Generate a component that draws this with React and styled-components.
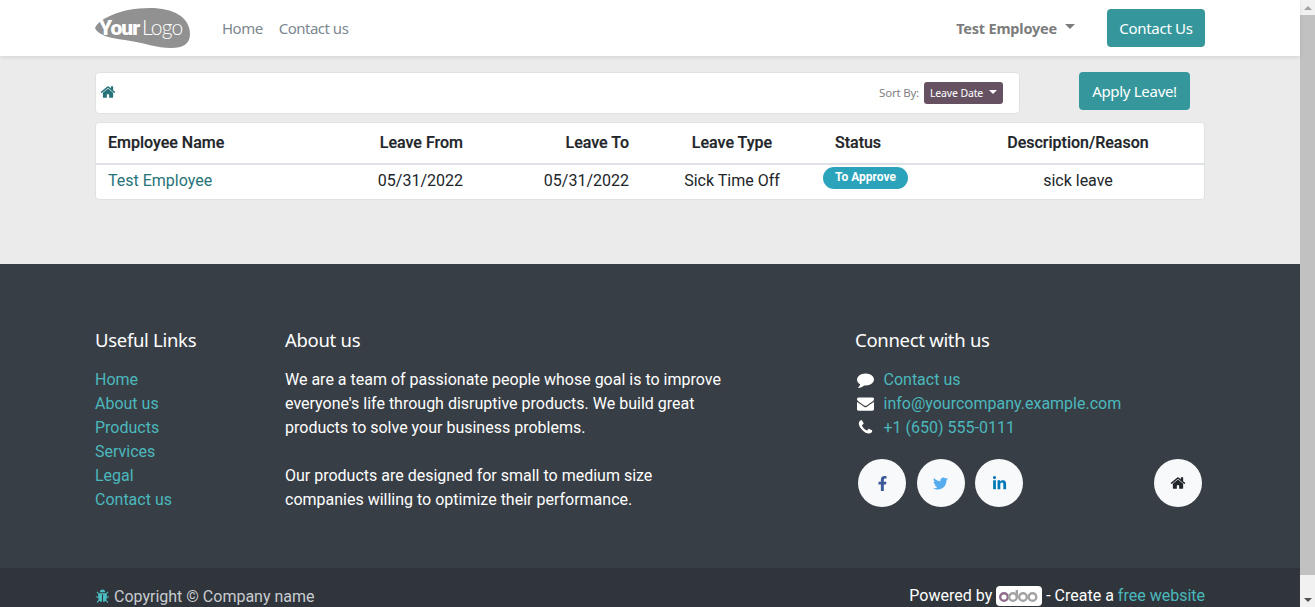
import styled, { createGlobalStyle } from 'styled-components';
import { FaFacebookF, FaTwitter, FaLinkedinIn } from 'react-icons/fa';

const GlobalStyle = createGlobalStyle`
  html, body {
    margin: 0;
    height: 100%;
    overflow: hidden;
  }
  body {
    font-family: Roboto, "Liberation Sans", sans-serif;
    font-size: 16px;
    line-height: 24px;
    color: #212529;
    background: #ebebeb;
  }
`;

const Screen = styled.div`
  display: flex;
  width: 1315px;
  height: 607px;
  overflow: hidden;
`;

const Page = styled.div`
  width: 1300px;
  flex: none;
  display: flex;
  flex-direction: column;
`;

const Scrollbar = styled.div`
  width: 15px;
  flex: none;
  background: #f1f1f1;
  display: flex;
  flex-direction: column;
  align-items: center;
`;

const ScrollArrow = styled.div`
  height: 15px;
  width: 15px;
  flex: none;
  display: flex;
  align-items: center;
  justify-content: center;
  &::before {
    content: '';
    border-left: 4px solid transparent;
    border-right: 4px solid transparent;
    ${p => p.$down ? 'border-top: 4px solid #505050;' : 'border-bottom: 4px solid #a3a3a3;'}
  }
`;

const ScrollThumb = styled.div`
  width: 15px;
  height: 560px;
  background: #c1c1c1;
  margin-bottom: auto;
`;

const Navbar = styled.header`
  height: 56px;
  flex: none;
  background: #fff;
  box-shadow: 0 2px 4px rgba(0, 0, 0, 0.08);
  padding: 0 95px;
  display: flex;
  align-items: center;
  position: relative;
`;

const Logo = styled.svg`
  width: 96px;
  height: 42px;
  margin-right: 31px;
`;

const NavLink = styled.a`
  font-family: "Noto Sans", sans-serif;
  font-size: 15px;
  letter-spacing: -0.5px;
  color: #7c8790;
  margin-right: 16px;
`;

const UserMenu = styled.div`
  margin-left: auto;
  margin-right: 32px;
  font-family: "Noto Sans", sans-serif;
  font-size: 14.5px;
  font-weight: 700;
  letter-spacing: -0.2px;
  color: #7c7c7c;
  display: flex;
  align-items: center;
`;

const Caret = styled.span`
  display: inline-block;
  margin-left: ${p => p.$gap || 8}px;
  border-top: ${p => p.$size || 5}px solid ${p => p.$color || '#7c7c7c'};
  border-left: ${p => p.$size || 5}px solid transparent;
  border-right: ${p => p.$size || 5}px solid transparent;
  margin-top: -3px;
`;

const TealButton = styled.a`
  display: flex;
  align-items: center;
  justify-content: center;
  background: #35979c;
  color: #fff;
  font-family: "Noto Sans", sans-serif;
  letter-spacing: -0.3px;
  font-size: 15px;
  border-radius: 4px;
  height: 38px;
  width: ${p => p.$w}px;
  flex: none;
`;

const Main = styled.main`
  height: 208px;
  box-sizing: border-box;
  flex: none;
  padding: 16px 95px 0;
`;

const TopRow = styled.div`
  display: flex;
  align-items: flex-start;
  gap: 59px;
`;

const Breadcrumb = styled.div`
  width: 925px;
  height: 42px;
  box-sizing: border-box;
  flex: none;
  background: #fff;
  border: 1px solid #dfe2e4;
  border-radius: 4px;
  padding: 0 16px 0 4px;
  display: flex;
  align-items: center;
`;

const BreadcrumbHome = styled.svg`
  width: 16px;
  height: 16px;
  margin-top: -2px;
  fill: #27737a;
`;

const SortLabel = styled.span`
  margin-left: auto;
  font-family: "Noto Sans", sans-serif;
  font-size: 11.5px;
  letter-spacing: -0.2px;
  color: #7f7f7f;
  margin-right: 5px;
`;

const SortButton = styled.span`
  display: flex;
  align-items: center;
  height: 22px;
  width: 79px;
  box-sizing: border-box;
  padding: 0 6px;
  background: #665163;
  color: #fff;
  border-radius: 3px;
  font-family: "Noto Sans", sans-serif;
  font-size: 10.5px;
  letter-spacing: -0.15px;
  white-space: nowrap;
`;

const TableCard = styled.div`
  margin-top: 8px;
  background: #fff;
  border: 1px solid #dfe2e4;
  border-radius: 4px;
  width: 1110px;
  height: 78px;
  box-sizing: border-box;
  overflow: hidden;
`;

const Table = styled.table`
  width: 1108px;
  table-layout: fixed;
  border-collapse: collapse;
`;

const Th = styled.th`
  height: 40px;
  padding: 0 12px;
  font-weight: 500;
  text-align: ${p => p.$align || 'left'};
  border-bottom: 2px solid #dee2e6;
  -webkit-text-stroke: 0.2px #212529;
`;

const Td = styled.td`
  height: 31px;
  padding: 0 12px 2px;
  text-align: ${p => p.$align || 'left'};
`;

const EmployeeLink = styled.a`
  color: #27737a;
`;

const StatusCell = styled.td`
  padding: 0;
  vertical-align: top;
`;

const Badge = styled.span`
  display: block;
  margin-top: 2px;
  width: 85px;
  height: 22px;
  line-height: 20px;
  text-align: center;
  border-radius: 11px;
  background: #2ba3bb;
  color: #fff;
  font-size: 12px;
  font-weight: 700;
`;

const Footer = styled.footer`
  background: #383e45;
  color: #fff;
  flex: 1;
  min-height: 0;
  display: flex;
  flex-direction: column;
`;

const FooterColumns = styled.div`
  height: 304px;
  flex: none;
  box-sizing: border-box;
  padding: 59px 95px 0;
  display: grid;
  grid-template-columns: 190px 570px 350px;
`;

const FooterHeading = styled.h5`
  margin: 0 0 12px;
  height: 33px;
  line-height: 33px;
  font-family: "Noto Sans", sans-serif;
  font-size: 18.5px;
  font-weight: 400;
  letter-spacing: -0.3px;
`;

const FooterLink = styled.a`
  display: block;
  color: #4bb8bd;
`;

const ContactRow = styled.div`
  display: flex;
  align-items: center;
  color: #4bb8bd;
`;

const ContactIcon = styled.svg`
  width: 17px;
  height: 17px;
  flex: none;
  margin-left: 2px;
  margin-right: 9.5px;
  margin-top: -1px;
  fill: #fff;
`;

const SocialRow = styled.div`
  margin-top: 19px;
  padding: 0 3px;
  display: flex;
  gap: 10.5px;
`;

const SocialButton = styled.a`
  width: 48px;
  height: 48px;
  border-radius: 50%;
  background: #f8f9fa;
  color: ${p => p.$color};
  font-size: 15px;
  display: flex;
  align-items: center;
  justify-content: center;
  ${p => p.$push && 'margin-left: auto;'}
`;

const SocialHome = styled.svg`
  width: 16px;
  height: 16px;
  fill: #212529;
`;

const BottomBar = styled.div`
  flex: 1;
  background: #30353c;
  padding: 15px 95px 0;
  display: flex;
  justify-content: space-between;
  align-items: flex-start;
`;

const Copyright = styled.span`
  color: #c9ccd0;
  display: flex;
  align-items: center;
  gap: 4px;
  margin-top: 2px;
`;

const BugIcon = styled.svg`
  width: 15px;
  height: 15px;
  margin-top: -2px;
  fill: #4bc0c4;
`;

const Powered = styled.span`
  display: flex;
  align-items: center;
  color: #fff;
  margin-top: 1px;
`;

const OdooBadge = styled.svg`
  width: 46px;
  height: 20px;
  margin: 0 4px;
`;

const BottomLink = styled.a`
  color: #4bb8bd;
  margin-left: 4px;
`;

const HOME_PATH = 'M1472 992v480q0 26-19 45t-45 19h-384v-384h-256v384h-384q-26 0-45-19t-19-45v-480q0-1 .5-3t.5-3l575-474 575 474q1 2 1 6zm223-69l-62 74q-8 9-21 11h-3q-13 0-21-7l-692-577-692 577q-12 8-24 7-13-2-21-11l-62-74q-8-10-7-23.5t11-21.5l719-599q32-26 76-26t76 26l244 204v-195q0-14 9-23t23-9h192q14 0 23 9t9 23v408l219 182q10 8 11 21.5t-7 23.5z';
const COMMENT_PATH = 'M1792 896q0 174-120 321.5t-326 233-450 85.5q-70 0-145-8-198 175-460 242-49 14-114 22-17 2-30.5-9t-17.5-29v-1q-3-4-.5-12t2-10 4.5-9.5l6-9 7-8.5 8-9q7-8 31-34.5t34.5-38 31-39.5 32.5-51 27-59 26-76q-157-89-247.5-220t-90.5-281q0-130 71-248.5t191-204.5 286-136.5 348-50.5q244 0 450 85.5t326 233 120 321.5z';
const ENVELOPE_PATH = 'M1792 710v794q0 66-47 113t-113 47h-1472q-66 0-113-47t-47-113v-794q44 49 101 87 362 246 497 345 57 42 92.5 65.5t94.5 48 110 24.5h2q51 0 110-24.5t94.5-48 92.5-65.5q170-123 498-345 57-39 100-87zm0-294q0 79-49 151t-122 123q-376 261-468 325-10 7-42.5 30.5t-54 38-52 32.5-57.5 27-50 9h-2q-23 0-50-9t-57.5-27-52-32.5-54-38-42.5-30.5q-91-64-262-182.5t-205-142.5q-62-42-117-115.5t-55-136.5q0-78 41.5-130t118.5-52h1472q65 0 112.5 47t47.5 113z';
const PHONE_PATH = 'M1600 1240q0 27-10 70.5t-21 68.5q-21 50-122 106-94 51-186 51-27 0-53-3.5t-57.5-12.5-47-14.5-55.5-20.5-49-18q-98-35-175-83-127-79-264-216t-216-264q-48-77-83-175-3-9-18-49t-20.5-55.5-14.5-47-12.5-57.5-3.5-53q0-92 51-186 56-101 106-122 25-11 68.5-21t70.5-10q14 0 21 3 18 6 53 76 11 19 30 54t35 63.5 31 53.5q3 4 17.5 25t21.5 35.5 7 28.5q0 20-28.5 50t-62 55-62 53-28.5 46q0 9 5 22.5t8.5 20.5 14 24 11.5 19q76 137 174 235t235 174q2 1 19 11.5t24 14 20.5 8.5 22.5 5q18 0 46-28.5t53-62 55-62 50-28.5q14 0 28.5 7t35.5 21.5 25 17.5q25 15 53.5 31t63.5 35 54 30q70 35 76 53 3 7 3 21z';
const BUG_PATH = 'M1696 960q0 26-19 45t-45 19h-224q0 171-67 290l208 209q19 19 19 45t-19 45q-18 19-45 19t-45-19l-198-197q-5 5-15 13t-42 28.5-65 36.5-82 29-97 13v-896h-128v896q-51 0-101.5-13.5t-87-33-66-39-43.5-32.5l-15-14-183 207q-20 21-48 21-24 0-43-16-19-18-20.5-44.5t15.5-46.5l202-227q-58-114-58-274h-224q-26 0-45-19t-19-45 19-45 45-19h224v-294l-173-173q-19-19-19-45t19-45 45-19 45 19l173 173h844l173-173q19-19 45-19t45 19 19 45-19 45l-173 173v294h224q26 0 45 19t19 45zm-480-576h-640q0-133 93.5-226.5t226.5-93.5 226.5 93.5 93.5 226.5z';

const YourLogo = () => (
  <Logo viewBox="0 0 96 42">
    <path d="M0 21 C4 12 25 1 55 1 C78 1 95 10 95 27 C95 37 88 41 76 41 C62 41 50 36 30 33 C14 31 3 28 0 21 Z" fill="#919191" />
    <text x="4" y="28" fontFamily="Roboto, sans-serif" fontWeight="900" fontSize="21" letterSpacing="-1" fill="#fff">Your</text>
    <text x="47" y="28" fontFamily="Lato, sans-serif" fontWeight="300" fontSize="21" letterSpacing="-0.8" fill="#fff">Logo</text>
  </Logo>
);

const OdooLogo = () => (
  <OdooBadge viewBox="0 0 46 20">
    <rect width="46" height="20" rx="4" fill="#fff" />
    <g fill="none" strokeWidth="2.4">
      <circle cx="8" cy="11" r="3.8" stroke="#8f6b8b" />
      <circle cx="17" cy="11" r="3.8" stroke="#a3a3a3" />
      <path d="M20.8 11 V4" stroke="#a3a3a3" />
      <circle cx="27" cy="11" r="3.8" stroke="#a3a3a3" />
      <circle cx="36.5" cy="11" r="3.8" stroke="#a3a3a3" />
    </g>
  </OdooBadge>
);

const usefulLinks = ['Home', 'About us', 'Products', 'Services', 'Legal', 'Contact us'];

const App = () => {
  return (
    <Screen>
      <GlobalStyle />
      <Page>
        <Navbar>
          <YourLogo />
          <NavLink>Home</NavLink>
          <NavLink>Contact us</NavLink>
          <UserMenu>Test Employee<Caret /></UserMenu>
          <TealButton $w={98}>Contact Us</TealButton>
        </Navbar>
        <Main>
          <TopRow>
            <Breadcrumb>
              <BreadcrumbHome viewBox="0 0 1792 1792"><path d={HOME_PATH} /></BreadcrumbHome>
              <SortLabel>Sort By:</SortLabel>
              <SortButton>Leave Date<Caret $color="#fff" $size={4} $gap={6} /></SortButton>
            </Breadcrumb>
            <TealButton $w={111}>Apply Leave!</TealButton>
          </TopRow>
          <TableCard>
            <Table>
              <colgroup>
                <col width="264" />
                <col width="115" />
                <col width="166" />
                <col width="182" />
                <col width="129" />
                <col width="252" />
              </colgroup>
              <thead>
                <tr>
                  <Th>Employee Name</Th>
                  <Th $align="right">Leave From</Th>
                  <Th $align="right">Leave To</Th>
                  <Th $align="center">Leave Type</Th>
                  <Th>Status</Th>
                  <Th $align="center">Description/Reason</Th>
                </tr>
              </thead>
              <tbody>
                <tr>
                  <Td><EmployeeLink>Test Employee</EmployeeLink></Td>
                  <Td $align="right">05/31/2022</Td>
                  <Td $align="right">05/31/2022</Td>
                  <Td $align="center">Sick Time Off</Td>
                  <StatusCell><Badge>To Approve</Badge></StatusCell>
                  <Td $align="center">sick leave</Td>
                </tr>
              </tbody>
            </Table>
          </TableCard>
        </Main>
        <Footer>
          <FooterColumns>
            <div>
              <FooterHeading>Useful Links</FooterHeading>
              {usefulLinks.map(link => <FooterLink key={link}>{link}</FooterLink>)}
            </div>
            <div>
              <FooterHeading>About us</FooterHeading>
              We are a team of passionate people whose goal is to improve<br />
              everyone's life through disruptive products. We build great<br />
              products to solve your business problems.<br />
              <br />
              Our products are designed for small to medium size<br />
              companies willing to optimize their performance.
            </div>
            <div>
              <FooterHeading>Connect with us</FooterHeading>
              <ContactRow><ContactIcon viewBox="0 0 1792 1792"><path d={COMMENT_PATH} /></ContactIcon>Contact us</ContactRow>
              <ContactRow><ContactIcon viewBox="0 0 1792 1792"><path d={ENVELOPE_PATH} /></ContactIcon>info@yourcompany.example.com</ContactRow>
              <ContactRow><ContactIcon viewBox="0 0 1792 1792"><path d={PHONE_PATH} /></ContactIcon>+1 (650) 555-0111</ContactRow>
              <SocialRow>
                <SocialButton $color="#3b5998"><FaFacebookF /></SocialButton>
                <SocialButton $color="#55acee"><FaTwitter /></SocialButton>
                <SocialButton $color="#0077b5"><FaLinkedinIn /></SocialButton>
                <SocialButton $color="#212529" $push><SocialHome viewBox="0 0 1792 1792"><path d={HOME_PATH} /></SocialHome></SocialButton>
              </SocialRow>
            </div>
          </FooterColumns>
          <BottomBar>
            <Copyright><BugIcon viewBox="0 0 1792 1792"><path d={BUG_PATH} /></BugIcon>Copyright © Company name</Copyright>
            <Powered>Powered by<OdooLogo />- Create a<BottomLink>free website</BottomLink></Powered>
          </BottomBar>
        </Footer>
      </Page>
      <Scrollbar>
        <ScrollArrow />
        <ScrollThumb />
        <ScrollArrow $down />
      </Scrollbar>
    </Screen>
  );
};

export default App;
